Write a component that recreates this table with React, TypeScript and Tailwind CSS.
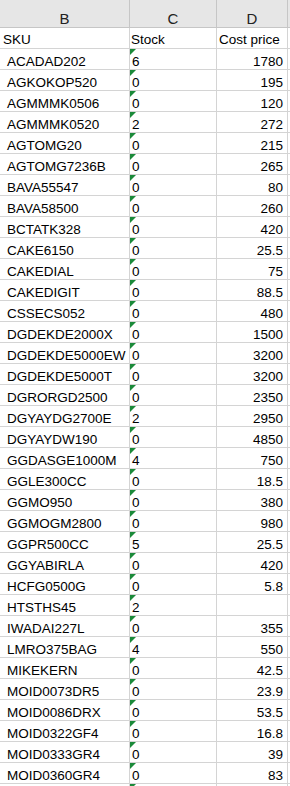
import React from 'react';

const ROWS: [string, string, string][] = [
  ['ACADAD202', '6', '1780'],
  ['AGKOKOP520', '0', '195'],
  ['AGMMMK0506', '0', '120'],
  ['AGMMMK0520', '2', '272'],
  ['AGTOMG20', '0', '215'],
  ['AGTOMG7236B', '0', '265'],
  ['BAVA55547', '0', '80'],
  ['BAVA58500', '0', '260'],
  ['BCTATK328', '0', '420'],
  ['CAKE6150', '0', '25.5'],
  ['CAKEDIAL', '0', '75'],
  ['CAKEDIGIT', '0', '88.5'],
  ['CSSECS052', '0', '480'],
  ['DGDEKDE2000X', '0', '1500'],
  ['DGDEKDE5000EW', '0', '3200'],
  ['DGDEKDE5000T', '0', '3200'],
  ['DGRORGD2500', '0', '2350'],
  ['DGYAYDG2700E', '2', '2950'],
  ['DGYAYDW190', '0', '4850'],
  ['GGDASGE1000M', '4', '750'],
  ['GGLE300CC', '0', '18.5'],
  ['GGMO950', '0', '380'],
  ['GGMOGM2800', '0', '980'],
  ['GGPR500CC', '5', '25.5'],
  ['GGYABIRLA', '0', '420'],
  ['HCFG0500G', '0', '5.8'],
  ['HTSTHS45', '2', ''],
  ['IWADAI227L', '0', '355'],
  ['LMRO375BAG', '4', '550'],
  ['MIKEKERN', '0', '42.5'],
  ['MOID0073DR5', '0', '23.9'],
  ['MOID0086DRX', '0', '53.5'],
  ['MOID0322GF4', '0', '16.8'],
  ['MOID0333GR4', '0', '39'],
  ['MOID0360GR4', '0', '83'],
  ['', '', ''],
];

// little green "number stored as text" flag
function Flag() {
  return (
    <svg className="absolute left-0 top-0" width="6" height="6" viewBox="0 0 6 6">
      <polygon points="0,0 6,0 0,6" fill="#1b8a3a" />
    </svg>
  );
}

export default function App() {
  return (
    <div
      className="w-[290px] h-[786px] overflow-hidden bg-white text-black text-[13.5px]"
      style={{ fontFamily: '"Liberation Sans", Arial, sans-serif' }}
    >
      {/* column letters */}
      <div className="grid grid-cols-[130px_87px_71px_1fr] h-[28px] bg-[#e6e6e6] border-b border-[#c6c6c6]">
        <div className="border-r border-[#c6c6c6] flex items-center justify-center pt-[8px] text-[15px] text-[#222]">B</div>
        <div className="border-r border-[#c6c6c6] flex items-center justify-center pt-[8px] text-[15px] text-[#222]">C</div>
        <div className="border-r border-[#c6c6c6] flex items-center justify-center pt-[8px] text-[15px] text-[#222]">D</div>
        <div />
      </div>

      {/* header row */}
      <div className="grid grid-cols-[130px_87px_71px_1fr] h-[21px] border-b border-[#d4d4d4] leading-[20px]">
        <div className="border-r border-[#d4d4d4] pl-[3px] whitespace-nowrap pt-[2px]">SKU</div>
        <div className="border-r border-[#d4d4d4] pl-[1px] whitespace-nowrap pt-[2px]">Stock</div>
        <div className="border-r border-[#d4d4d4] pl-[2px] whitespace-nowrap pt-[2px]">Cost price</div>
        <div />
      </div>

      {ROWS.map(([sku, stock, cost], i) => (
        <div
          key={i}
          className="grid grid-cols-[130px_87px_71px_1fr] h-[21px] border-b border-[#d4d4d4] leading-[20px]"
        >
          <div className="border-r border-[#d4d4d4] pl-[7px] whitespace-nowrap overflow-hidden pt-[3px]">{sku}</div>
          <div className="relative border-r border-[#d4d4d4] pl-[2px] pt-[3px]">
            <Flag />
            {stock}
          </div>
          <div className="border-r border-[#d4d4d4] pr-[4px] text-right pt-[3px]">{cost}</div>
          <div />
        </div>
      ))}
    </div>
  );
}
